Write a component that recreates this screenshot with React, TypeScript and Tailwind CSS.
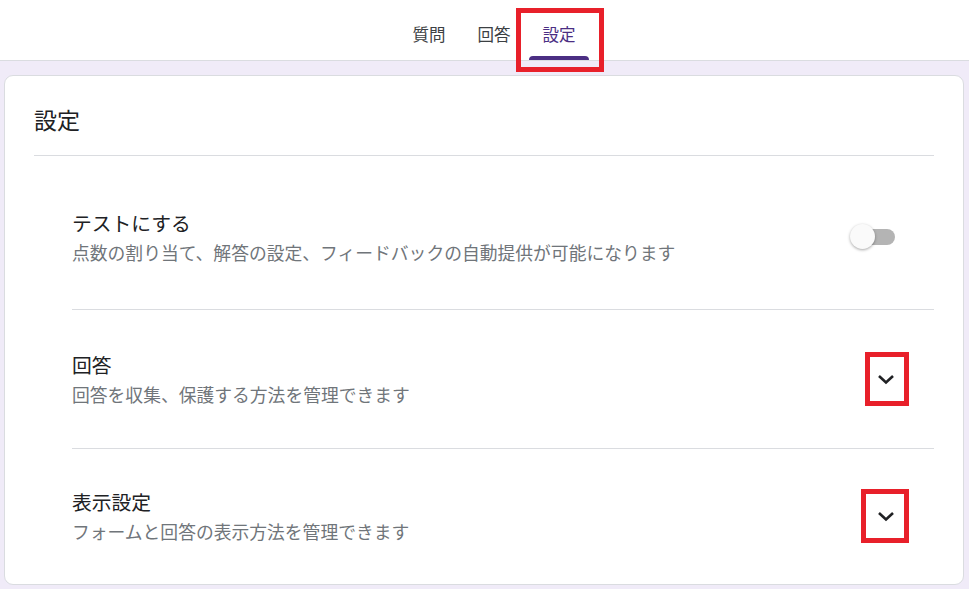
import React from 'react';

const font = { fontFamily: '"Noto Sans CJK JP", "Noto Sans", sans-serif' };

interface RowProps {
  title: string;
  sub: string;
  children: React.ReactNode;
  className: string;
  last?: boolean;
}

function SettingRow({ title, sub, children, className, last }: RowProps) {
  return (
    <div className={`flex items-center justify-between ml-[38px] ${last ? '' : 'border-b border-[#dadce0]'} ${className}`}>
      <div className="flex flex-col">
        <span className="text-[19.8px] leading-[28px] text-[#202124]">{title}</span>
        <span className="text-[17.8px] leading-[26px] text-[#70757a] mt-[2px]">{sub}</span>
      </div>
      {children}
    </div>
  );
}

function Chevron() {
  return (
    <svg width="24" height="24" viewBox="0 0 24 24">
      <path d="M5 9 L12 15.5 L19 9" fill="none" stroke="#202124" strokeWidth="2.6" />
    </svg>
  );
}

export default function App() {
  const tabs = ['質問', '回答', '設定'];
  return (
    <div className="w-[969px] h-[589px] bg-[#f0ebf8] relative overflow-hidden" style={font}>
      {/* タブ */}
      <div className="h-[61px] bg-white border-b border-[#dadce0] flex justify-center pl-[19px]">
        <div className="flex gap-[5px]">
          {tabs.map((t, i) => (
            <div key={t} className="w-[60px] flex flex-col items-center justify-end">
              <span className={`text-[16.5px] leading-[24px] mb-[10px] ${i === 2 ? 'text-[#4b2e83]' : 'text-[#3c4043]'}`}>{t}</span>
              <div className={`h-[4px] w-full rounded-t-[4px] ${i === 2 ? 'bg-[#4b2e83]' : 'bg-transparent'}`} />
            </div>
          ))}
        </div>
      </div>

      {/* カード */}
      <div className="mt-[14px] ml-[4px] w-[960px] h-[510px] bg-white border border-[#dadce0] rounded-[9px] px-[29px]">
        <div className="h-[80px] border-b border-[#dadce0] flex items-end pb-[20px]">
          <span className="text-[23px] leading-[32px] text-[#202124]">設定</span>
        </div>

        <SettingRow
          title="テストにする"
          sub="点数の割り当て、解答の設定、フィードバックの自動提供が可能になります"
          className="h-[154px] pt-[8px]"
        >
          <div className="relative w-[46px] h-[26px] mr-[38px] flex items-center">
            <div className="absolute left-[8px] w-[37px] h-[16px] rounded-full bg-[#b4b4b4]" />
            <div className="absolute left-0 w-[25px] h-[25px] rounded-full bg-[#fafafa] shadow-[0_1px_3px_rgba(0,0,0,0.35)]" />
          </div>
        </SettingRow>

        <SettingRow title="回答" sub="回答を収集、保護する方法を管理できます" className="h-[139px]">
          <div className="mr-[36px]">
            <Chevron />
          </div>
        </SettingRow>

        <SettingRow title="表示設定" sub="フォームと回答の表示方法を管理できます" className="h-[134px]" last>
          <div className="mr-[36px]">
            <Chevron />
          </div>
        </SettingRow>
      </div>

      {/* 赤い注釈枠 */}
      <div className="absolute left-[516px] top-[8px] w-[88px] h-[64px] border-[5px] border-[#e8202a]" />
      <div className="absolute left-[865px] top-[352px] w-[44px] h-[54px] border-[5px] border-[#e8202a]" />
      <div className="absolute left-[861px] top-[489px] w-[48px] h-[54px] border-[5px] border-[#e8202a]" />
    </div>
  );
}
